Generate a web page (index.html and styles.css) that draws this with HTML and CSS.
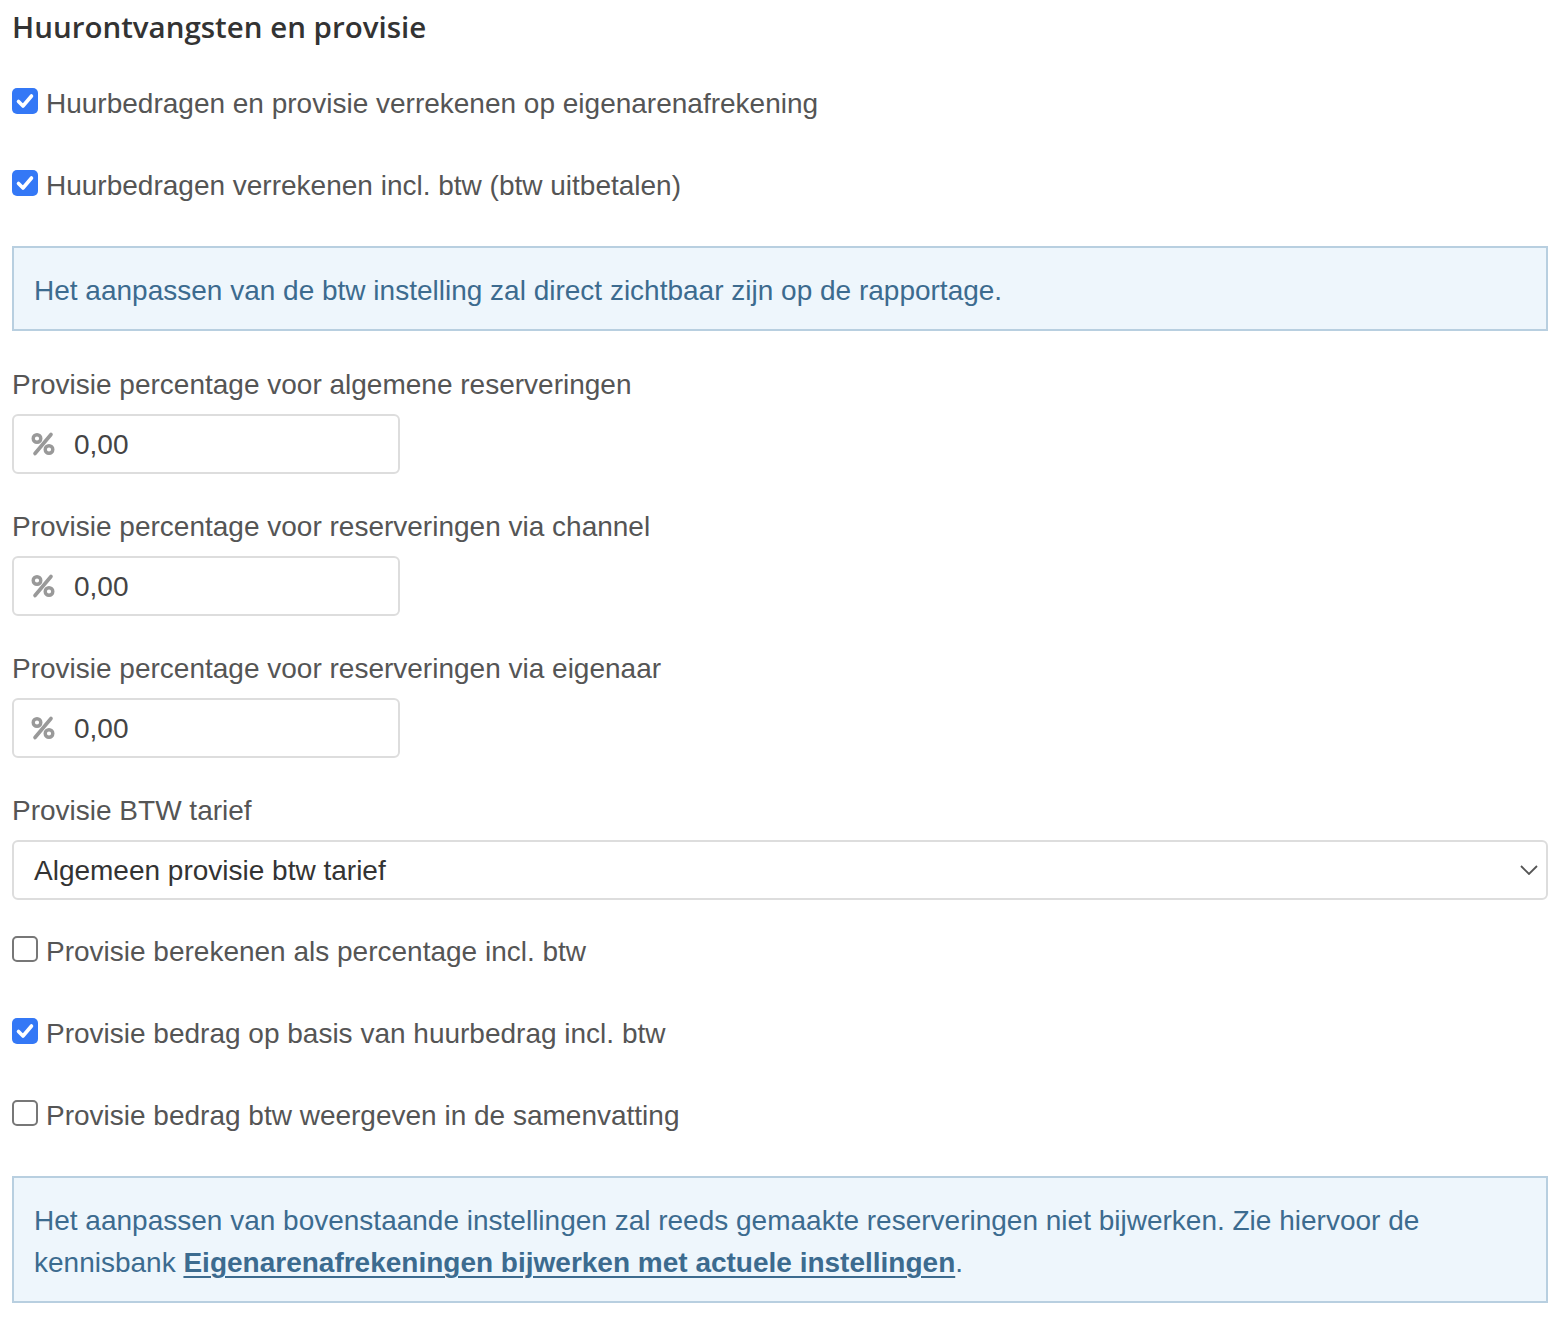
FILE: index.html
```html
<!DOCTYPE html>
<html lang="nl">
<head>
<meta charset="utf-8">
<title>Huurontvangsten en provisie</title>
<link rel="stylesheet" href="styles.css">
</head>
<body>
<div class="page">
  <h2 class="title">Huurontvangsten en provisie</h2>

  <label class="check-row first">
    <span class="cb checked"><svg viewBox="0 0 26 26" width="26" height="26"><path d="M6.5 13.5 L11 18 L19.5 8" fill="none" stroke="#fff" stroke-width="3.6" stroke-linecap="round" stroke-linejoin="round"/></svg></span>
    <span class="check-text">Huurbedragen en provisie verrekenen op eigenarenafrekening</span>
  </label>

  <label class="check-row">
    <span class="cb checked"><svg viewBox="0 0 26 26" width="26" height="26"><path d="M6.5 13.5 L11 18 L19.5 8" fill="none" stroke="#fff" stroke-width="3.6" stroke-linecap="round" stroke-linejoin="round"/></svg></span>
    <span class="check-text">Huurbedragen verrekenen incl. btw (btw uitbetalen)</span>
  </label>

  <div class="alert alert-one">Het aanpassen van de btw instelling zal direct zichtbaar zijn op de rapportage.</div>

  <div class="form-group">
    <div class="label">Provisie percentage voor algemene reserveringen</div>
    <div class="input-pct"><svg class="pct" viewBox="0 0 26 26" width="26" height="26"><circle cx="7" cy="7.5" r="3.8" fill="none" stroke="#999" stroke-width="3.4"/><circle cx="19" cy="18.5" r="3.8" fill="none" stroke="#999" stroke-width="3.4"/><path d="M21 3.5 L5 22.5" stroke="#999" stroke-width="3.6" stroke-linecap="round"/></svg><span class="value">0,00</span></div>
  </div>

  <div class="form-group">
    <div class="label">Provisie percentage voor reserveringen via channel</div>
    <div class="input-pct"><svg class="pct" viewBox="0 0 26 26" width="26" height="26"><circle cx="7" cy="7.5" r="3.8" fill="none" stroke="#999" stroke-width="3.4"/><circle cx="19" cy="18.5" r="3.8" fill="none" stroke="#999" stroke-width="3.4"/><path d="M21 3.5 L5 22.5" stroke="#999" stroke-width="3.6" stroke-linecap="round"/></svg><span class="value">0,00</span></div>
  </div>

  <div class="form-group">
    <div class="label">Provisie percentage voor reserveringen via eigenaar</div>
    <div class="input-pct"><svg class="pct" viewBox="0 0 26 26" width="26" height="26"><circle cx="7" cy="7.5" r="3.8" fill="none" stroke="#999" stroke-width="3.4"/><circle cx="19" cy="18.5" r="3.8" fill="none" stroke="#999" stroke-width="3.4"/><path d="M21 3.5 L5 22.5" stroke="#999" stroke-width="3.6" stroke-linecap="round"/></svg><span class="value">0,00</span></div>
  </div>

  <div class="form-group last">
    <div class="label">Provisie BTW tarief</div>
    <div class="select">
      <span class="value">Algemeen provisie btw tarief</span>
      <svg class="chev" viewBox="0 0 18 10" width="18" height="10"><path d="M1 1 L9 9 L17 1" fill="none" stroke="#555" stroke-width="1.8"/></svg>
    </div>
  </div>

  <label class="check-row first">
    <span class="cb"></span>
    <span class="check-text">Provisie berekenen als percentage incl. btw</span>
  </label>

  <label class="check-row">
    <span class="cb checked"><svg viewBox="0 0 26 26" width="26" height="26"><path d="M6.5 13.5 L11 18 L19.5 8" fill="none" stroke="#fff" stroke-width="3.6" stroke-linecap="round" stroke-linejoin="round"/></svg></span>
    <span class="check-text">Provisie bedrag op basis van huurbedrag incl. btw</span>
  </label>

  <label class="check-row">
    <span class="cb"></span>
    <span class="check-text">Provisie bedrag btw weergeven in de samenvatting</span>
  </label>

  <div class="alert alert-two"><span class="line">Het aanpassen van bovenstaande instellingen zal reeds gemaakte reserveringen niet bijwerken. Zie hiervoor de</span><span class="line">kennisbank <a class="link" href="#">Eigenarenafrekeningen bijwerken met actuele instellingen</a>.</span></div>
</div>
</body>
</html>
```

FILE: styles.css
```css
html, body {
  margin: 0;
  padding: 0;
  background: #fff;
}

body {
  font-family: "Liberation Sans", Arial, sans-serif;
  font-size: 28px;
  color: #555;
}

.page {
  width: 1536px;
  padding: 10px 16px 20px 12px;
  box-sizing: content-box;
}

.title {
  margin: 0;
  font-family: "Open Sans", "Liberation Sans", sans-serif;
  font-weight: 600;
  font-size: 29.5px;
  line-height: 34px;
  color: #333;
}

.check-row {
  display: flex;
  align-items: center;
  height: 40px;
  line-height: 40px;
  margin-top: 42px;
  cursor: pointer;
}

.check-row.first {
  margin-top: 39px;
}

.form-group.last + .check-row.first {
  margin-top: 31px;
}

.cb {
  flex: none;
  width: 26px;
  height: 26px;
  box-sizing: border-box;
  border: 2px solid #777;
  border-radius: 5px;
  background: #fff;
  margin-right: 8px;
  margin-top: -5px;
  display: block;
}

.cb.checked {
  border: none;
  background: #3478f6;
}

.cb svg {
  display: block;
}

.check-text {
  white-space: nowrap;
  padding-top: 2px;
}

.alert {
  margin-top: 41px;
  border: 2px solid #b8cfe0;
  background: #eef6fc;
  color: #3c6b8f;
  padding: 22px 20px 17px 20px;
  line-height: 42px;
}

.alert .line {
  display: block;
}

.link {
  color: #3c6b8f;
  font-weight: 700;
  text-decoration: underline;
  text-decoration-thickness: 2px;
  text-underline-offset: 4px;
}

.form-group {
  margin-top: 32px;
}

.alert + .form-group {
  margin-top: 33px;
}

.label {
  line-height: 42px;
  margin-bottom: 8px;
}

.input-pct {
  width: 388px;
  height: 60px;
  box-sizing: border-box;
  border: 2px solid #ddd;
  border-radius: 6px;
  display: flex;
  align-items: center;
  padding-left: 16px;
  color: #444;
}

.pct {
  display: block;
  flex: none;
  margin-right: 18px;
}

.value {
  padding-top: 2px;
}

.select {
  height: 60px;
  box-sizing: border-box;
  border: 2px solid #ddd;
  border-radius: 6px;
  display: flex;
  align-items: center;
  justify-content: space-between;
  padding: 0 8px 0 20px;
  color: #333;
}

.chev {
  display: block;
}
```
